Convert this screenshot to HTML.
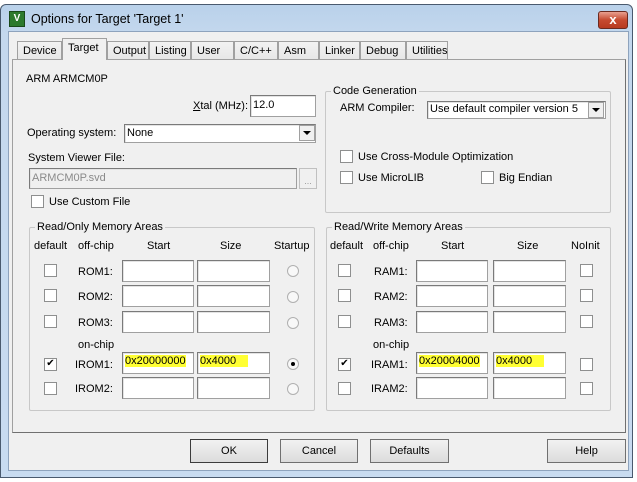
<!DOCTYPE html>
<html><head><meta charset="utf-8"><style>
*{box-sizing:border-box;margin:0;padding:0}
body{width:637px;height:482px;overflow:hidden;background:#fff;font-family:"Liberation Sans",sans-serif;font-size:11px;color:#000;position:relative}
.a{position:absolute;white-space:nowrap}
.frame{left:0;top:4px;width:633px;height:474px;background:linear-gradient(#b9d1ea,#c4d8ee 30px,#c8dbf0);border:1px solid #4a5a6e;border-radius:6px 6px 0 0}
.client{left:8px;top:31px;width:621px;height:440px;background:#f0f0f0;border:1px solid #8ea3bd}
.tab{top:41px;height:19px;border:1px solid #a0a0a0;border-bottom:none;background:linear-gradient(#f2f2f2,#e6e6e6);padding:3px 0 0 5px}
.tab.sel{top:38px;height:22px;background:#f0f0f0;z-index:3}
.page{left:12px;top:59px;width:614px;height:374px;border:1px solid #a0a0a0;border-right-color:#707070;border-bottom-color:#707070;background:#f0f0f0;z-index:2}
.grp{border:1px solid #c8c8c8;border-radius:2px;z-index:4}
.gt{background:#f0f0f0;padding:0 2px;z-index:5}
.ed{background:#fff;border:1px solid #a0a0a0;border-top-color:#7a7a7a;border-left-color:#7a7a7a;box-shadow:inset 1px 1px 0 #e3e3e3;z-index:5;padding:2px 2px}
.cb{width:13px;height:13px;border:1px solid #8e8f8f;background:#fff;z-index:5}
.rd{width:12px;height:12px;border:1px solid #b0b0b0;border-radius:50%;background:#f8f8f8;z-index:5}
.t{z-index:5}
.hl{background:#ffff33}
.btn{height:24px;border:1px solid #707070;background:linear-gradient(#f2f2f2,#dcdcdc);text-align:center;line-height:22px;z-index:5}
.dd{width:16px;height:16px;border:1px solid #a0a0a0;background:#f0f0f0;z-index:6}
.dd:after{content:"";position:absolute;left:3px;top:5px;border-left:4px solid transparent;border-right:4px solid transparent;border-top:4px solid #000}
</style></head><body>
<div class="a frame"></div>
<div class="a" style="left:9px;top:11px;width:16px;height:16px;background:#2d7a2d;border:1px solid #1a4a1a;color:#fff;font-size:10px;font-weight:bold;line-height:14px;text-align:center">V</div>
<div class="a" style="left:31px;top:12px;font-size:12.5px">Options for Target 'Target 1'</div>
<div class="a" style="left:598px;top:11px;width:30px;height:18px;border:1px solid #6b2a20;border-radius:3px;background:linear-gradient(#e8a090,#c64a30 50%,#b83a20);color:#fff;font-weight:bold;text-align:center;line-height:16px;font-size:13px">x</div>
<div class="a client"></div>

<div class="a tab" style="left:17px;width:45px">Device</div>
<div class="a tab sel" style="left:62px;width:45px;padding-top:3px">Target</div>
<div class="a tab" style="left:107px;width:42px">Output</div>
<div class="a tab" style="left:149px;width:42px">Listing</div>
<div class="a tab" style="left:191px;width:43px">User</div>
<div class="a tab" style="left:234px;width:44px">C/C++</div>
<div class="a tab" style="left:278px;width:41px">Asm</div>
<div class="a tab" style="left:319px;width:41px">Linker</div>
<div class="a tab" style="left:360px;width:46px">Debug</div>
<div class="a tab" style="left:406px;width:42px">Utilities</div>
<div class="a page"></div>

<div class="a t" style="left:26px;top:73px">ARM ARMCM0P</div>
<div class="a t" style="left:193px;top:100px"><u>X</u>tal (MHz):</div>
<div class="a ed" style="left:250px;top:95px;width:66px;height:22px;padding-top:3px">12.0</div>
<div class="a t" style="left:27px;top:127px">Operating system:</div>
<div class="a ed" style="left:124px;top:124px;width:192px;height:19px">None</div>
<div class="a dd" style="left:299px;top:125px"></div>
<div class="a t" style="left:28px;top:152px">System Viewer File:</div>
<div class="a ed" style="left:29px;top:168px;width:268px;height:21px;background:#f0f0f0;color:#8a8a8a;padding-top:3px">ARMCM0P.svd</div>
<div class="a" style="left:299px;top:168px;width:18px;height:21px;border:1px solid #c0c0c0;background:#f0f0f0;z-index:5;color:#999;text-align:center;font-size:9px;line-height:24px">...</div>
<div class="a cb" style="left:31px;top:195px"></div>
<div class="a t" style="left:49px;top:196px">Use Custom File</div>

<div class="a grp" style="left:325px;top:91px;width:286px;height:122px"></div>
<div class="a gt" style="left:331px;top:85px">Code Generation</div>
<div class="a t" style="left:340px;top:102px">ARM Compiler:</div>
<div class="a ed" style="left:427px;top:101px;width:179px;height:18px;padding-top:1px">Use default compiler version 5</div>
<div class="a dd" style="left:588px;top:102px"></div>
<div class="a cb" style="left:340px;top:150px"></div>
<div class="a t" style="left:358px;top:151px">Use Cross-Module Optimization</div>
<div class="a cb" style="left:340px;top:171px"></div>
<div class="a t" style="left:358px;top:172px">Use MicroLIB</div>
<div class="a cb" style="left:481px;top:171px"></div>
<div class="a t" style="left:499px;top:172px">Big Endian</div>

<!-- left memory -->
<div class="a grp" style="left:29px;top:227px;width:286px;height:184px"></div>
<div class="a gt" style="left:35px;top:221px">Read/Only Memory Areas</div>
<div class="a t" style="left:34px;top:240px">default</div>
<div class="a t" style="left:78px;top:240px">off-chip</div>
<div class="a t" style="left:147px;top:240px">Start</div>
<div class="a t" style="left:220px;top:240px">Size</div>
<div class="a t" style="left:274px;top:240px">Startup</div>
<div class="a t" style="left:78px;top:339px">on-chip</div>

<div class="a cb" style="left:44px;top:264px"></div><div class="a t" style="left:78px;top:266px">ROM1:</div>
<div class="a ed" style="left:122px;top:260px;width:72px;height:22px"></div><div class="a ed" style="left:197px;top:260px;width:73px;height:22px"></div><div class="a rd" style="left:287px;top:265px"></div>
<div class="a cb" style="left:44px;top:289px"></div><div class="a t" style="left:78px;top:291px">ROM2:</div>
<div class="a ed" style="left:122px;top:285px;width:72px;height:22px"></div><div class="a ed" style="left:197px;top:285px;width:73px;height:22px"></div><div class="a rd" style="left:287px;top:291px"></div>
<div class="a cb" style="left:44px;top:315px"></div><div class="a t" style="left:78px;top:317px">ROM3:</div>
<div class="a ed" style="left:122px;top:311px;width:72px;height:22px"></div><div class="a ed" style="left:197px;top:311px;width:73px;height:22px"></div><div class="a rd" style="left:287px;top:317px"></div>
<div class="a cb" style="left:44px;top:358px;font-size:10px;line-height:10px;text-align:center">✔</div><div class="a t" style="left:75px;top:359px">IROM1:</div>
<div class="a ed" style="left:122px;top:352px;width:72px;height:22px;padding-top:2px"><span class="hl">0x20000000</span></div><div class="a ed" style="left:197px;top:352px;width:73px;height:22px;padding-top:2px"><span class="hl">0x4000&nbsp;&nbsp;&nbsp;&nbsp;</span></div><div class="a rd" style="left:287px;top:358px"><div style="position:absolute;left:3px;top:3px;width:4px;height:4px;border-radius:50%;background:#000"></div></div>
<div class="a cb" style="left:44px;top:382px"></div><div class="a t" style="left:75px;top:383px">IROM2:</div>
<div class="a ed" style="left:122px;top:377px;width:72px;height:22px"></div><div class="a ed" style="left:197px;top:377px;width:73px;height:22px"></div><div class="a rd" style="left:287px;top:383px"></div>

<!-- right memory -->
<div class="a grp" style="left:326px;top:227px;width:285px;height:184px"></div>
<div class="a gt" style="left:332px;top:221px">Read/Write Memory Areas</div>
<div class="a t" style="left:330px;top:240px">default</div>
<div class="a t" style="left:373px;top:240px">off-chip</div>
<div class="a t" style="left:441px;top:240px">Start</div>
<div class="a t" style="left:517px;top:240px">Size</div>
<div class="a t" style="left:571px;top:240px">NoInit</div>
<div class="a t" style="left:373px;top:339px">on-chip</div>

<div class="a cb" style="left:338px;top:264px"></div><div class="a t" style="left:374px;top:266px">RAM1:</div>
<div class="a ed" style="left:416px;top:260px;width:72px;height:22px"></div><div class="a ed" style="left:493px;top:260px;width:73px;height:22px"></div><div class="a cb" style="left:580px;top:264px"></div>
<div class="a cb" style="left:338px;top:289px"></div><div class="a t" style="left:374px;top:291px">RAM2:</div>
<div class="a ed" style="left:416px;top:285px;width:72px;height:22px"></div><div class="a ed" style="left:493px;top:285px;width:73px;height:22px"></div><div class="a cb" style="left:580px;top:289px"></div>
<div class="a cb" style="left:338px;top:315px"></div><div class="a t" style="left:374px;top:317px">RAM3:</div>
<div class="a ed" style="left:416px;top:311px;width:72px;height:22px"></div><div class="a ed" style="left:493px;top:311px;width:73px;height:22px"></div><div class="a cb" style="left:580px;top:315px"></div>
<div class="a cb" style="left:338px;top:358px;font-size:10px;line-height:10px;text-align:center">✔</div><div class="a t" style="left:371px;top:359px">IRAM1:</div>
<div class="a ed" style="left:416px;top:352px;width:72px;height:22px;padding-top:2px"><span class="hl">0x20004000</span></div><div class="a ed" style="left:493px;top:352px;width:73px;height:22px;padding-top:2px"><span class="hl">0x4000&nbsp;&nbsp;&nbsp;&nbsp;</span></div><div class="a cb" style="left:580px;top:358px"></div>
<div class="a cb" style="left:338px;top:382px"></div><div class="a t" style="left:371px;top:383px">IRAM2:</div>
<div class="a ed" style="left:416px;top:377px;width:72px;height:22px"></div><div class="a ed" style="left:493px;top:377px;width:73px;height:22px"></div><div class="a cb" style="left:580px;top:382px"></div>

<div class="a btn" style="left:190px;top:439px;width:78px;border-color:#3c3c3c">OK</div>
<div class="a btn" style="left:280px;top:439px;width:78px">Cancel</div>
<div class="a btn" style="left:370px;top:439px;width:79px">Defaults</div>
<div class="a btn" style="left:547px;top:439px;width:79px">Help</div>
</body></html>
